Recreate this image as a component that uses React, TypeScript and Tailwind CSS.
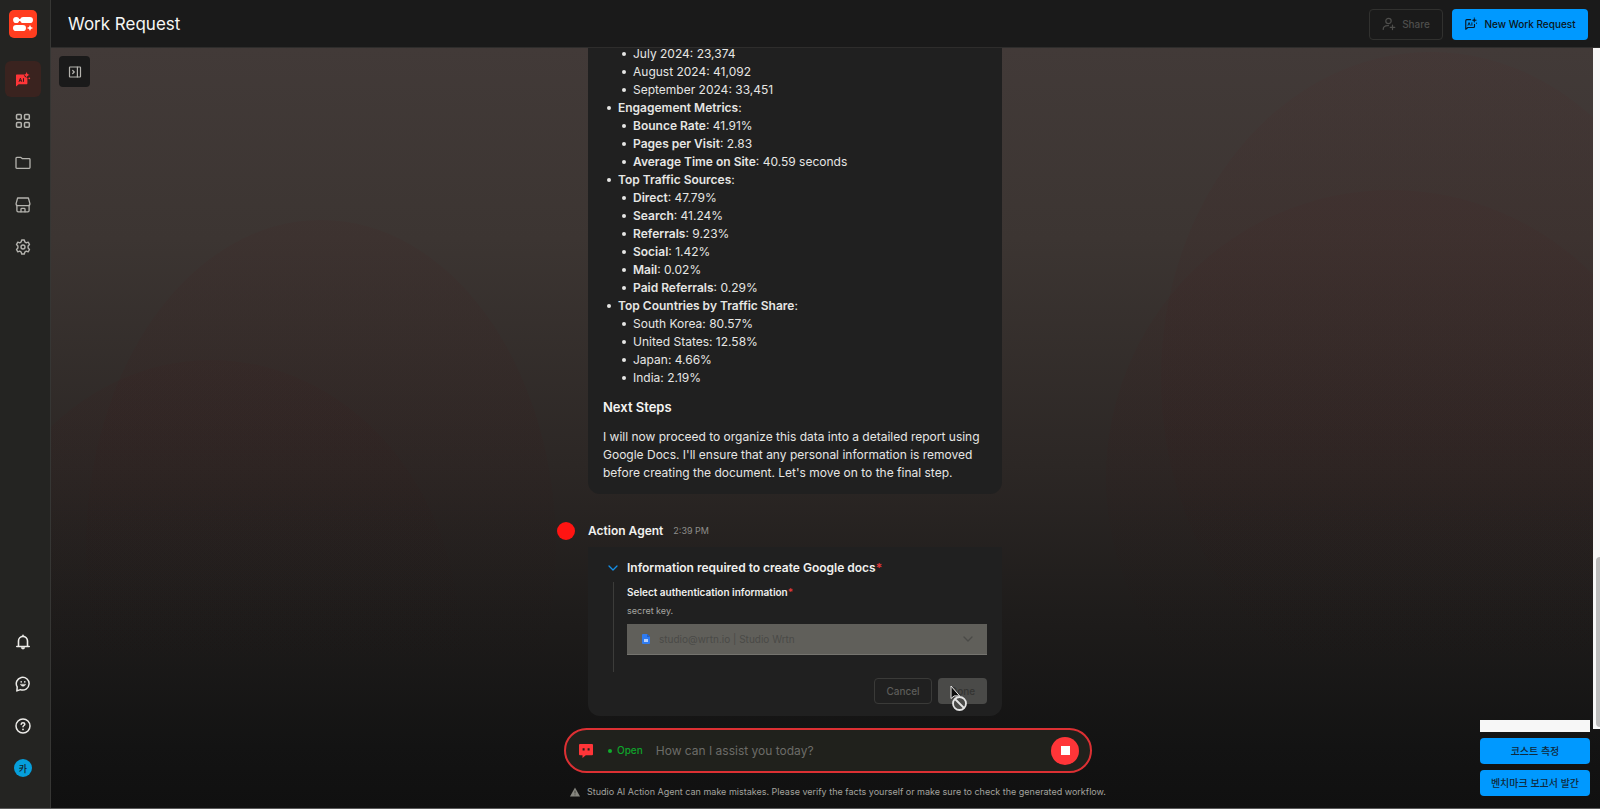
import React from "react";

type IconProps = { className?: string };

const stroke = {
  fill: "none",
  stroke: "currentColor",
  strokeLinecap: "round" as const,
  strokeLinejoin: "round" as const,
};

function Logo() {
  return (
    <svg viewBox="0 0 28 28" className="size-7" aria-hidden="true">
      <rect width="28" height="28" rx="5" fill="#ff3d1f" />
      <g fill="#fff">
        <circle cx="7.2" cy="10" r="3.1" />
        <rect x="9.4" y="9" width="3" height="2" />
        <rect x="11.2" y="6.9" width="12.8" height="6.2" rx="3.1" />
        <rect x="4" y="14.9" width="13" height="6.2" rx="3.1" />
        <path d="M21 14.8c.5 2 1.200 2.700 3.300 3.200-2.100.5-2.800 1.200-3.300 3.200-.5-2-1.200-2.700-3.300-3.200 2.100-.5 2.800-1.200 3.300-3.200z" />
      </g>
    </svg>
  );
}

function AiFilledIcon({ className }: IconProps) {
  return (
    <svg viewBox="0 0 16 16" className={className} aria-hidden="true">
      <path
        d="M1.600 3.600h7.200c.3 1.900 1.500 3 3.600 3.500v5.100c0 .6-.4 1-1 1H3.700L1 15.600V4.200c0-.3.3-.6.6-.6z"
        fill="currentColor"
      />
      <path d="M11.600.8c.4 2.200 1 2.800 3.200 3.200-2.200.4-2.800 1-3.200 3.200-.4-2.200-1-2.800-3.200-3.200 2.200-.4 2.800-1 3.200-3.200z" fill="currentColor" />
      <circle cx="14.300" cy="7.300" r=".9" fill="currentColor" />
      <path d="M4 10.800l1.400-3.600 1.400 3.600M4.500 9.700h1.800M8.500 7.200v3.600" fill="none" stroke="#3a1f1b" strokeWidth="1" />
    </svg>
  );
}

function AiOutlineIcon({ className }: IconProps) {
  return (
    <svg viewBox="0 0 16 16" className={className} aria-hidden="true" {...stroke} strokeWidth="1.300">
      <path d="M7.500 3H3.200A1.200 1.200 0 0 0 2 4.200V14l2.400-2h6.400a1.200 1.200 0 0 0 1.200-1.200V8.500" />
      <path d="M11.800.8c.3 1.900.9 2.500 2.800 2.800-1.900.3-2.500.9-2.800 2.800-.3-1.900-.9-2.500-2.800-2.800 1.900-.3 2.500-.9 2.800-2.800z" fill="currentColor" strokeWidth=".3" />
      <path d="M4.600 9.400l1.200-3 1.200 3M9 6.600v2.800" strokeWidth="1.100" />
      <path d="M14.300 7v.1" />
    </svg>
  );
}

function GridIcon({ className }: IconProps) {
  return (
    <svg viewBox="0 0 16 16" className={className} aria-hidden="true" {...stroke} strokeWidth="1.500">
      <rect x="1.500" y="1.500" width="4.800" height="4.800" rx="1" />
      <rect x="9.500" y="1.500" width="4.800" height="4.800" rx="1" />
      <rect x="1.500" y="9.500" width="4.800" height="4.800" rx="1" />
      <rect x="9.500" y="9.500" width="4.800" height="4.800" rx="1" />
    </svg>
  );
}

function FolderIcon({ className }: IconProps) {
  return (
    <svg viewBox="0 0 16 16" className={className} aria-hidden="true" {...stroke} strokeWidth="1.300">
      <path d="M1 3.200c0-.4.3-.8.800-.8h4.100l1.600 1.300h6.700c.5 0 .8.300.8.800v8.100c0 .4-.3.800-.8.800H1.800c-.5 0-.8-.4-.8-.8z" />
    </svg>
  );
}

function StoreIcon({ className }: IconProps) {
  return (
    <svg viewBox="0 0 16 16" className={className} aria-hidden="true" {...stroke} strokeWidth="1.300">
      <path d="M2.600 1h10.800l1.500 5.700c0 1.300-.8 2-1.900 2H3c-1.100 0-1.900-.7-1.900-2z" />
      <path d="M1.900 8.500v5.100c0 .8.500 1.300 1.300 1.300h9.600c.8 0 1.300-.5 1.300-1.300V8.500" />
      <path d="M6 14.800v-2.600c0-.5.300-.8.800-.8h2.400c.5 0 .8.300.8.800v2.600" />
    </svg>
  );
}

function GearIcon({ className }: IconProps) {
  return (
    <svg viewBox="0 0 16 16" className={className} aria-hidden="true" {...stroke} strokeWidth="1.400">
      <path d="M6.700 1h2.600l.5 1.900 1.500.9 1.900-.6 1.300 2.300-1.400 1.400v2.200l1.400 1.400-1.300 2.300-1.900-.6-1.500.9-.5 1.900H6.700l-.5-1.900-1.500-.9-1.900.6-1.300-2.300 1.400-1.400V6.900L1.500 5.500l1.300-2.300 1.900.6 1.500-.9z" />
      <circle cx="8" cy="8" r="2" />
    </svg>
  );
}

function BellIcon({ className }: IconProps) {
  return (
    <svg viewBox="0 0 16 16" className={className} aria-hidden="true" {...stroke} strokeWidth="1.600">
      <path d="M1.800 12.500h12.400M3.500 12.400V6.900a4.500 4.500 0 0 1 9 0v5.500M8 1.200v1" />
      <path d="M5.900 13.300h4.200a2.100 2.100 0 0 1-4.200 0z" fill="currentColor" stroke="none" />
    </svg>
  );
}

function ChatSmileIcon({ className }: IconProps) {
  return (
    <svg viewBox="0 0 16 16" className={className} aria-hidden="true" {...stroke} strokeWidth="1.500">
      <path d="M1.900 14.900l.3-4A6.400 6.400 0 1 1 5.400 13.600z" />
      <path d="M5.500 8.600a2.700 2.700 0 0 0 5 0z" fill="currentColor" strokeWidth=".6" />
      <path d="M6.200 5.700v.3M9.800 5.700v.3" strokeWidth="1.600" />
    </svg>
  );
}

function HelpIcon({ className }: IconProps) {
  return (
    <svg viewBox="0 0 16 16" className={className} aria-hidden="true" {...stroke} strokeWidth="1.500">
      <circle cx="8" cy="8" r="7" />
      <path d="M6.200 6.300c.1-1 .8-1.600 1.800-1.600s1.800.6 1.800 1.500c0 1.300-1.800 1.300-1.800 2.600" />
      <path d="M8 11.300v.1" strokeWidth="1.700" />
    </svg>
  );
}

function PanelIcon({ className }: IconProps) {
  return (
    <svg viewBox="0 0 14 14" className={className} aria-hidden="true" {...stroke} strokeWidth="1.200">
      <rect x="1.500" y="2" width="11" height="10" rx=".5" />
      <path d="M9.400 2v10M4.700 5.500L6.300 7 4.700 8.500" />
    </svg>
  );
}

function UserPlusIcon({ className }: IconProps) {
  return (
    <svg viewBox="0 0 14 14" className={className} aria-hidden="true" {...stroke} strokeWidth="1.200">
      <circle cx="6.500" cy="4" r="2.700" />
      <path d="M1.200 12.500c0-2.400 1.800-3.900 4.500-3.900h.8M10.500 8v4.600M8.200 10.300h4.600" />
    </svg>
  );
}

function ChevronIcon({ className }: IconProps) {
  return (
    <svg viewBox="0 0 10 6" className={className} aria-hidden="true" {...stroke} strokeWidth="1.300">
      <path d="M1 1l4 4 4-4" />
    </svg>
  );
}

function DocIcon({ className }: IconProps) {
  return (
    <svg viewBox="0 0 8 10" className={className} aria-hidden="true">
      <path d="M1 0h4l3 3v6a1 1 0 0 1-1 1H1a1 1 0 0 1-1-1V1a1 1 0 0 1 1-1z" fill="#2f7bf0" />
      <path d="M5 0l3 3H5z" fill="#1c5ed0" />
      <path d="M2 5h4v3H2z" fill="#b4d0ff" />
    </svg>
  );
}

function BotIcon({ className }: IconProps) {
  return (
    <svg viewBox="0 0 14 14" className={className} aria-hidden="true">
      <path d="M1 0h12a1 1 0 0 1 1 1v9.200a1 1 0 0 1-1 1H6.800L3.500 14v-2.800H1a1 1 0 0 1-1-1V1a1 1 0 0 1 1-1z" fill="#ff3538" />
      <path d="M3.600 4.300h2v2.200h-2zM8.600 4.300h2v2.200h-2z" fill="#20211c" />
    </svg>
  );
}

function WarningIcon({ className }: IconProps) {
  return (
    <svg viewBox="0 0 10 10" className={className} aria-hidden="true">
      <path d="M5 .5L10 9.500H0z" fill="#86867f" />
      <path d="M5 3.700v2.800M5 7.400v.9" stroke="#3a3a36" strokeWidth=".9" />
    </svg>
  );
}

function BlockedPointer() {
  return (
    <svg viewBox="0 0 18 28" className="pointer-events-none absolute top-[7px] left-3 h-7 w-[18px]" aria-hidden="true">
      <path d="M1 1v12.500l3.200-2.600H9.600z" fill="#0c0c0c" stroke="#e8e8e8" strokeWidth="1" />
      <circle cx="9.500" cy="18.500" r="6.500" fill="#4a4a48" stroke="#e4e4e4" strokeWidth="1.800" />
      <path d="M5 14l9 9" stroke="#e4e4e4" strokeWidth="1.800" />
    </svg>
  );
}

function Backdrop() {
  return (
    <svg
      viewBox="0 0 1549 760"
      preserveAspectRatio="none"
      className="pointer-events-none absolute inset-0 size-full"
      aria-hidden="true"
    >
      <defs>
        <linearGradient id="fade" x1="0" y1="0" x2="0" y2="760" gradientUnits="userSpaceOnUse">
          <stop offset="0" stopColor="#4a3030" stopOpacity=".2" />
          <stop offset=".5" stopColor="#3a1c1c" stopOpacity=".13" />
          <stop offset=".85" stopColor="#1a1212" stopOpacity="0" />
        </linearGradient>
      </defs>
      <g fill="url(#fade)">
        <ellipse cx="270" cy="500" rx="235" ry="328" />
        <ellipse cx="160" cy="600" rx="250" ry="288" />
        <ellipse cx="1380" cy="330" rx="270" ry="326" />
        <ellipse cx="1340" cy="430" rx="285" ry="288" />
      </g>
    </svg>
  );
}

const navItems = [
  { label: "Templates", Icon: GridIcon },
  { label: "Files", Icon: FolderIcon },
  { label: "Store", Icon: StoreIcon },
  { label: "Settings", Icon: GearIcon },
];

const footerItems = [
  { label: "Notifications", Icon: BellIcon },
  { label: "Feedback", Icon: ChatSmileIcon },
  { label: "Help", Icon: HelpIcon },
];

function Sidebar() {
  return (
    <nav className="flex w-[51px] shrink-0 flex-col border-r border-[#363634] bg-[#242422] pt-[10px] pb-[22px] pl-[5px]">
      <a href="#home" aria-label="Home" className="flex w-9 justify-center">
        <Logo />
      </a>
      <ul className="mt-[23px] flex w-9 flex-col gap-[6px]">
        <li>
          <a href="#work" aria-label="Work Request" className="flex size-9 items-center justify-center rounded-md bg-[#3a231f] text-[#ff3538]">
            <AiFilledIcon className="size-4" />
          </a>
        </li>
        {navItems.map(({ label, Icon }) => (
          <li key={label}>
            <a href={`#${label.toLowerCase()}`} aria-label={label} className="flex size-9 items-center justify-center text-[#b4b3ae]">
              <Icon className="size-4" />
            </a>
          </li>
        ))}
      </ul>
      <ul className="mt-auto flex w-9 flex-col gap-[6px]">
        {footerItems.map(({ label, Icon }) => (
          <li key={label}>
            <button type="button" aria-label={label} className="flex size-9 items-center justify-center text-[#ecebe8]">
              <Icon className="size-4" />
            </button>
          </li>
        ))}
        <li>
          <button type="button" className="flex size-9 items-center justify-center">
            <span className="flex size-[18px] items-center justify-center rounded-full bg-[#069fdc] text-[9px] leading-none font-medium text-[#10222c]">카</span>
          </button>
        </li>
      </ul>
    </nav>
  );
}

function Header() {
  return (
    <header className="flex h-12 shrink-0 items-center justify-between border-b border-[#2e2d2c] bg-[#1a1a1a] pt-px pr-3 pl-[17px]">
      <h1 className="text-[17px] leading-6 text-[#f6f6f4]">Work Request</h1>
      <div className="flex gap-[9px]">
        <button type="button" disabled className="flex h-[31px] w-[74px] items-center justify-center gap-[6px] rounded border border-[#31312f] text-[10px] font-medium text-[#4e4e4c]">
          <UserPlusIcon className="size-[14px]" />
          Share
        </button>
        <button type="button" className="flex h-[31px] w-[136px] items-center justify-center gap-[6px] rounded bg-[#0099ff] text-[10px] font-medium text-[#0b1620]">
          <AiOutlineIcon className="size-[14px]" />
          New Work Request
        </button>
      </div>
    </header>
  );
}

type Metric = { name: string; value: string; strong?: boolean };
type Group = { title?: string; items: Metric[] };

const groups: Group[] = [
  {
    items: [
      { name: "July 2024", value: "23,374" },
      { name: "August 2024", value: "41,092" },
      { name: "September 2024", value: "33,451" },
    ],
  },
  {
    title: "Engagement Metrics",
    items: [
      { name: "Bounce Rate", value: "41.91%", strong: true },
      { name: "Pages per Visit", value: "2.83", strong: true },
      { name: "Average Time on Site", value: "40.59 seconds", strong: true },
    ],
  },
  {
    title: "Top Traffic Sources",
    items: [
      { name: "Direct", value: "47.79%", strong: true },
      { name: "Search", value: "41.24%", strong: true },
      { name: "Referrals", value: "9.23%", strong: true },
      { name: "Social", value: "1.42%", strong: true },
      { name: "Mail", value: "0.02%", strong: true },
      { name: "Paid Referrals", value: "0.29%", strong: true },
    ],
  },
  {
    title: "Top Countries by Traffic Share",
    items: [
      { name: "South Korea", value: "80.57%" },
      { name: "United States", value: "12.58%" },
      { name: "Japan", value: "4.66%" },
      { name: "India", value: "2.19%" },
    ],
  },
];

function BulletRow({ children }: { children: React.ReactNode }) {
  return (
    <div className="flex items-center gap-[7px] before:-ml-[11px] before:size-1 before:rounded-full before:bg-current">
      <span>{children}</span>
    </div>
  );
}

function MetricList({ items }: { items: Metric[] }) {
  return (
    <ul className="pl-[15px]">
      {items.map((item) => (
        <li key={item.name}>
          <BulletRow>
            {item.strong ? <strong className="font-semibold">{item.name}</strong> : item.name}: {item.value}
          </BulletRow>
        </li>
      ))}
    </ul>
  );
}

function ReportMessage() {
  return (
    <article className="ml-[31px] w-[414px] shrink-0 rounded-b-xl bg-[#202020] px-[15px] pb-3 text-xs leading-[18px] text-[#e6e6e4]">
      <ul className="pl-[15px]">
        {groups.map((group, index) => (
          <li key={index}>
            {group.title && (
              <BulletRow>
                <strong className="font-semibold">{group.title}</strong>:
              </BulletRow>
            )}
            <MetricList items={group.items} />
          </li>
        ))}
      </ul>
      <h2 className="mt-[10px] text-[13px] leading-5 font-semibold text-[#f4f4f2]">Next Steps</h2>
      <p className="mt-[11px]">
        I will now proceed to organize this data into a detailed report using Google Docs. I'll ensure that any personal
        information is removed before creating the document. Let's move on to the final step.
      </p>
    </article>
  );
}

function AgentMessage() {
  return (
    <article className="mt-[27px] shrink-0">
      <div className="flex h-5 items-center">
        <span className="size-[18px] rounded-full bg-[#ff1412]" />
        <h2 className="ml-[13px] text-xs font-semibold text-[#f0f0ee]">Action Agent</h2>
        <time className="ml-[10px] text-[9px] text-[#8e8e8a]">2:39 PM</time>
      </div>
      <form className="mt-[6px] ml-[31px] w-[414px] rounded-b-xl bg-[#202020] pt-3 pr-[15px] pb-3 pl-5">
        <div className="flex items-center gap-[9px] text-xs leading-[18px] font-semibold text-[#f0f0ee]">
          <ChevronIcon className="h-[6px] w-[10px] text-[#1490e8]" />
          <h3>
            Information required to create Google docs<span className="text-[#e0383a]">*</span>
          </h3>
        </div>
        <div className="mt-[5px] ml-[5px] flex h-[90px] flex-col border-l border-[#3c3c3a] pt-[2px] pl-[13px]">
          <label htmlFor="auth" className="text-[10px] leading-4 font-semibold text-[#f0f0ee]">
            Select authentication information<span className="text-[#e0383a]">*</span>
          </label>
          <p className="mt-1 text-[9px] leading-[14px] text-[#a5a5a1]">secret key.</p>
          <div className="relative mt-[6px]">
            <select id="auth" disabled className="block h-[31px] w-full appearance-none border-b border-[#75746f] bg-[#605f5a] pl-8 text-[10px] text-[#4a4a47] opacity-100">
              <option>studio@wrtn.io | Studio Wrtn</option>
            </select>
            <DocIcon className="pointer-events-none absolute top-[10px] left-[15px] h-[10px] w-2" />
            <ChevronIcon className="pointer-events-none absolute top-3 right-[14px] h-[6px] w-[10px] text-[#4a4a47]" />
          </div>
        </div>
        <div className="mt-[6px] flex justify-end gap-[6px]">
          <button type="button" disabled className="h-[26px] w-[58px] rounded border border-[#3a3a38] text-[10px] font-medium text-[#5d5d5a]">
            Cancel
          </button>
          <div className="relative flex">
            <button type="submit" disabled className="h-[26px] w-[49px] rounded bg-[#4a4a48] text-[10px] font-medium text-[#343432]">
              Done
            </button>
            <BlockedPointer />
          </div>
        </div>
      </form>
    </article>
  );
}

function Composer() {
  return (
    <form className="mt-3 mr-[2px] ml-[7px] flex h-[45px] shrink-0 items-center rounded-full border-2 border-[#dc3033] bg-[#20211c] pr-[11px] pl-[13px]">
      <BotIcon className="size-[14px]" />
      <span className="ml-[15px] size-1 rounded-full bg-[#0fae2c]" />
      <span className="ml-[5px] text-[10px] font-medium text-[#0fa32b]">Open</span>
      <input
        type="text"
        aria-label="Message"
        placeholder="How can I assist you today?"
        className="ml-[13px] min-w-0 flex-1 bg-transparent text-xs text-[#e6e6e4] outline-none placeholder:text-[#6c6c68]"
      />
      <button type="button" aria-label="Stop" className="flex size-7 items-center justify-center rounded-full bg-[#ff3538]">
        <span className="size-[9px] bg-white" />
      </button>
    </form>
  );
}

function AdminTools() {
  return (
    <aside className="absolute right-[10px] bottom-3 flex w-[110px] flex-col gap-[6px]">
      <div className="h-3 bg-[#f7f7f7]" />
      {["코스트 측정", "벤치마크 보고서 발간"].map((label) => (
        <button key={label} type="button" className="h-[26px] rounded bg-[#0099ff] text-[10px] font-medium whitespace-nowrap text-[#10293c]">
          {label}
        </button>
      ))}
    </aside>
  );
}

export default function App() {
  return (
    <div className="flex h-screen overflow-hidden border-b border-[#5a5a5a] bg-[#111111] font-['Inter','Noto_Sans_CJK_KR',sans-serif]">
      <Sidebar />
      <div className="flex min-w-0 flex-1 flex-col">
        <Header />
        <main className="relative flex min-h-0 flex-1 flex-col items-center bg-[linear-gradient(180deg,#423a38_0%,#3c3532_25%,#2c2725_55%,#1d1b1a_76%,#131313_92%,#101010_100%)]">
          <Backdrop />
          <div className="relative flex min-h-0 w-[537px] flex-1 flex-col pb-2">
            <section className="flex min-h-0 flex-1 flex-col justify-end overflow-hidden">
              <ReportMessage />
              <AgentMessage />
            </section>
            <Composer />
            <p className="mt-[11px] ml-[13px] flex h-4 shrink-0 items-center gap-[7px] text-[9px] whitespace-nowrap text-[#a3a39f]">
              <WarningIcon className="size-[10px] shrink-0" />
              Studio AI Action Agent can make mistakes. Please verify the facts yourself or make sure to check the generated workflow.
            </p>
          </div>
          <button type="button" aria-label="Open panel" className="absolute top-2 left-2 flex size-[31px] items-center justify-center rounded bg-[#1a1a1a] text-[#b4b3ae]">
            <PanelIcon className="size-[14px]" />
          </button>
          <div className="absolute top-0 right-0 bottom-[79px] flex w-[7px] flex-col justify-end bg-[#f7f7f7] pb-[2px]">
            <div className="ml-auto h-1/4 w-1 rounded-l-full bg-[#bdbdbd]" />
          </div>
          <AdminTools />
        </main>
      </div>
    </div>
  );
}
